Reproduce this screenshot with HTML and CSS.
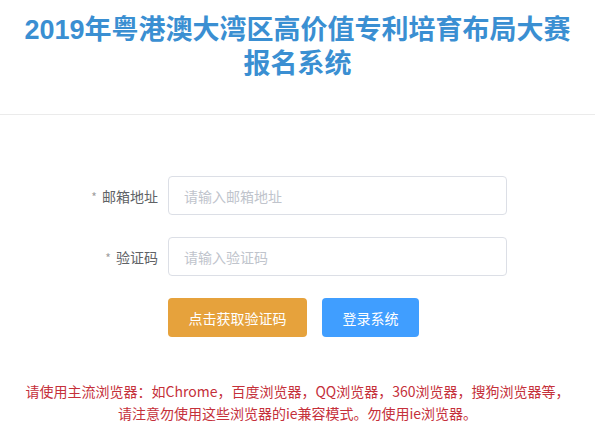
FILE: index.html
```html
<!DOCTYPE html>
<html lang="zh-CN">
<head>
<meta charset="utf-8">
<title>报名系统</title>
<link rel="stylesheet" href="styles.css">
</head>
<body>
<header class="header">
  <h1 class="title"><span class="title-line">2019年粤港澳大湾区高价值专利培育布局大赛</span><span class="title-line">报名系统</span></h1>
</header>
<main class="main">
  <form class="form">
    <div class="row">
      <label class="label"><span class="star">*</span> 邮箱地址</label>
      <div class="input">请输入邮箱地址</div>
    </div>
    <div class="row">
      <label class="label"><span class="star">*</span> 验证码</label>
      <div class="input">请输入验证码</div>
    </div>
    <div class="actions">
      <button type="button" class="btn btn-warning">点击获取验证码</button>
      <button type="button" class="btn btn-primary">登录系统</button>
    </div>
  </form>
  <p class="notice">请使用主流浏览器：如Chrome，百度浏览器，QQ浏览器，360浏览器，搜狗浏览器等，<br>请注意勿使用这些浏览器的ie兼容模式。勿使用ie浏览器。</p>
</main>
</body>
</html>
```

FILE: styles.css
```css
* { box-sizing: border-box; }
html, body {
  margin: 0;
  padding: 0;
  background: #fff;
  font-family: "Noto Sans CJK SC", "Noto Sans", sans-serif;
}
.header {
  height: 115px;
  border-bottom: 1px solid #ebebeb;
  padding-top: 13px;
  text-align: center;
}
.title {
  margin: 0;
  font-family: "Liberation Sans", "Noto Sans CJK SC", sans-serif;
  font-size: 27px;
  font-weight: 700;
  color: #3a8fd2;
}
.title-line {
  display: block;
  height: 34px;
  line-height: 34px;
}
.main {
  padding-top: 61px;
}
.form {
  display: flex;
  flex-direction: column;
  gap: 22px;
}
.row {
  display: flex;
  align-items: center;
  gap: 10px;
}
.label {
  width: 158px;
  text-align: right;
  font-size: 14px;
  color: #606266;
}
.star {
  color: #a0a0a0;
  font-size: 12px;
  margin-right: 2px;
}
.input {
  width: 339px;
  height: 39px;
  border: 1px solid #dcdfe6;
  border-radius: 4px;
  padding-left: 15px;
  display: flex;
  align-items: center;
  font-size: 14px;
  color: #c0c4cc;
}
.actions {
  display: flex;
  gap: 15px;
  padding-left: 168px;
}
.btn {
  border: none;
  border-radius: 4px;
  height: 39px;
  padding: 0 20px;
  font-family: inherit;
  font-size: 14px;
  color: #fff;
}
.btn-warning { background: #e6a23c; width: 139px; }
.btn-primary { background: #409eff; width: 97px; }
.notice {
  margin: 43px 0 0;
  text-align: center;
  font-size: 14px;
  line-height: 22px;
  color: #c5303a;
}
```
